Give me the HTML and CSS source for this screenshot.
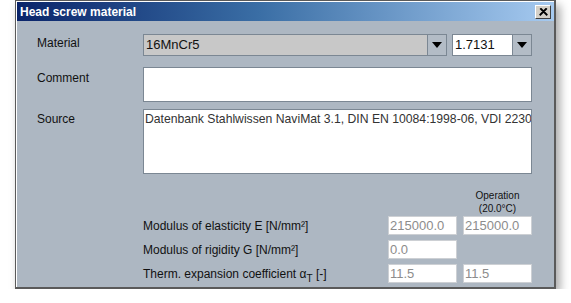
FILE: index.html
```html
<!DOCTYPE html>
<html lang="en">
<head>
    <meta charset="UTF-8">
    <title>Head screw material</title>
    <link rel="stylesheet" href="styles.css">
</head>
<body>
    <div class="window">
        <div class="titlebar">
            <span class="title">Head screw material</span>
            <span class="close-btn">
                <svg width="9" height="8" viewBox="0 0 9 8">
                    <path d="M1 0.5 L8 7.5 M2 0.5 L8.5 7 M8 0.5 L1 7.5 M7 0.5 L0.5 7" stroke="#000" stroke-width="1.1"/>
                </svg>
            </span>
        </div>
        <div class="panel">
            <div class="form">
                <label class="lbl lbl-material">Material</label>
                <div class="combos">
                    <div class="combo combo-main">
                        <span class="combo-text">16MnCr5</span>
                        <span class="combo-arrow"><i></i></span>
                    </div>
                    <div class="combo combo-num">
                        <span class="combo-text">1.7131</span>
                        <span class="combo-arrow"><i></i></span>
                    </div>
                </div>

                <label class="lbl">Comment</label>
                <div class="textbox comment"></div>

                <label class="lbl lbl-source">Source</label>
                <div class="textbox source">Datenbank Stahlwissen NaviMat 3.1, DIN EN 10084:1998-06, VDI 2230</div>
            </div>

            <div class="props">
                <span></span>
                <span></span>
                <span class="col-head">Operation<br>(20.0°C)</span>

                <span class="prop-lbl">Modulus of elasticity E [N/mm²]</span>
                <span class="val">215000.0</span>
                <span class="val">215000.0</span>

                <span class="prop-lbl">Modulus of rigidity G [N/mm²]</span>
                <span class="val">0.0</span>
                <span></span>

                <span class="prop-lbl">Therm. expansion coefficient α<sub>T</sub> [-]</span>
                <span class="val">11.5</span>
                <span class="val">11.5</span>
            </div>
        </div>
    </div>
</body>
</html>
```

FILE: styles.css
```css
body {
    margin: 0;
    padding: 0;
    background-color: #ffffff;
    font-family: "Liberation Sans", Arial, sans-serif;
    font-size: 12px;
    color: #111;
}

.window {
    margin-left: 15px;
    width: 537px;
    height: 285px;
    background-color: #ffffff;
    border: 1px solid #5a5a5a;
    border-right-width: 2px;
    border-bottom-width: 2px;
    padding: 1px 0 0 1px;
    display: flex;
    flex-direction: column;
    box-shadow: 4px 5px 9px rgba(0, 0, 0, 0.35);
}

.titlebar {
    height: 19px;
    display: flex;
    align-items: center;
    justify-content: space-between;
    padding: 0 3px 0 3px;
    background: linear-gradient(to right, #0a246a 0%, #3a6ea5 45%, #a6caf0 100%);
}

.title {
    color: #ffffff;
    font-weight: bold;
    font-size: 12px;
}

.close-btn {
    width: 14px;
    height: 12px;
    display: flex;
    align-items: center;
    justify-content: center;
    background-color: #d4d0c8;
    border: 1px solid;
    border-color: #ffffff #404040 #404040 #ffffff;
    margin-top: 1px;
}

.panel {
    flex: 1;
    background-color: #adb7c2;
    padding: 13px 21px 0 20px;
}

/* top form */
.form {
    display: grid;
    grid-template-columns: 106px 389px;
}

.lbl {
    padding-top: 4px;
}

.lbl-material {
    padding-top: 2px;
}

.lbl-source {
    padding-top: 3px;
}

.combos {
    display: flex;
    gap: 5px;
    height: 22px;
    margin-bottom: 11px;
}

.combo {
    display: flex;
    border: 1px solid #7b8793;
    box-sizing: border-box;
    height: 22px;
}

.combo-main {
    width: 304px;
    background-color: #c8c8c8;
}

.combo-num {
    width: 80px;
    background-color: #ffffff;
}

.combo-text {
    flex: 1;
    padding-left: 2px;
    line-height: 20px;
    font-size: 13px;
}

.combo-arrow {
    width: 18px;
    border-left: 1px solid #7b8793;
    background-color: #b3bcc6;
    display: flex;
    align-items: center;
    justify-content: center;
}

.combo-arrow i {
    width: 0;
    height: 0;
    border-left: 5px solid transparent;
    border-right: 5px solid transparent;
    border-top: 6px solid #000;
}

.textbox {
    background-color: #ffffff;
    border: 1px solid #7b8793;
    box-sizing: border-box;
    font-size: 12px;
    color: #333;
}

.comment {
    height: 35px;
    margin-bottom: 7px;
}

.source {
    height: 65px;
    padding: 2px 0 0 1px;
    white-space: nowrap;
    overflow: hidden;
    font-size: 12.2px;
}

/* properties table */
.props {
    display: grid;
    grid-template-columns: 239px 69px 69px;
    column-gap: 6px;
    row-gap: 5px;
    margin-left: 106px;
    margin-top: 15px;
}

.col-head {
    font-size: 10px;
    text-align: center;
    line-height: 13px;
    margin-bottom: -4px;
}

.prop-lbl {
    align-self: center;
    white-space: nowrap;
}

.prop-lbl sub {
    font-size: 10px;
    vertical-align: -4px;
    line-height: 0;
}

.val {
    height: 19px;
    box-sizing: border-box;
    border: 1px solid #cdd0d4;
    background-color: #ffffff;
    color: #8c8c8c;
    font-size: 13px;
    line-height: 17px;
    padding-left: 1px;
}
```
